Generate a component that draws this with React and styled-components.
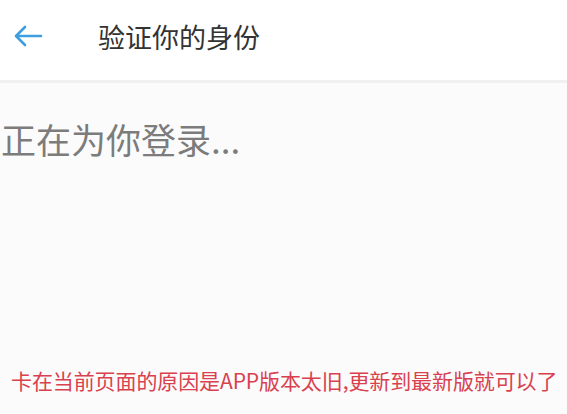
import React from 'react'
import styled, { createGlobalStyle } from 'styled-components'

const GlobalStyle = createGlobalStyle`
  html, body {
    margin: 0;
    padding: 0;
    background: #fbfbfb;
  }
  body {
    font-family: "Noto Sans CJK SC", "Liberation Sans", sans-serif;
  }
`

const Page = styled.div`
  width: 567px;
  height: 414px;
  display: flex;
  flex-direction: column;
  overflow: hidden;
  background: #fbfbfb;
`

const Header = styled.div`
  height: 83px;
  display: flex;
  align-items: center;
  background: #fff;
  border-bottom: 3px solid #f0f0f0;
  box-sizing: border-box;
  padding-left: 12px;
`

const BackBtn = styled.div`
  width: 32px;
  height: 32px;
  display: flex;
  align-items: center;
  justify-content: center;
  margin-top: -8px;
`

const Title = styled.div`
  margin-left: 54px;
  margin-top: -8px;
  font-size: 27px;
  color: #333;
`

const Body = styled.div`
  flex: 1;
  display: flex;
  flex-direction: column;
  padding: 31px 0 0 1px;
`

const Loading = styled.div`
  font-size: 35px;
  line-height: 50px;
  color: #7c7c7c;
`

const Notice = styled.div`
  margin-top: auto;
  margin-bottom: 20px;
  padding-left: 10px;
  font-size: 21px;
  line-height: 28px;
  color: #d9414f;
  letter-spacing: -0.1px;
  white-space: nowrap;
`

export default function App() {
  return (
    <Page>
      <GlobalStyle />
      <Header>
        <BackBtn>
          <svg width="30" height="22" viewBox="0 0 30 22" fill="none">
            <path d="M28 11H3M12 2L3 11l9 9" stroke="#3d9fe0" strokeWidth="2.6" strokeLinecap="round" strokeLinejoin="round" />
          </svg>
        </BackBtn>
        <Title>验证你的身份</Title>
      </Header>
      <Body>
        <Loading>正在为你登录...</Loading>
        <Notice>卡在当前页面的原因是APP版本太旧,更新到最新版就可以了</Notice>
      </Body>
    </Page>
  )
}
